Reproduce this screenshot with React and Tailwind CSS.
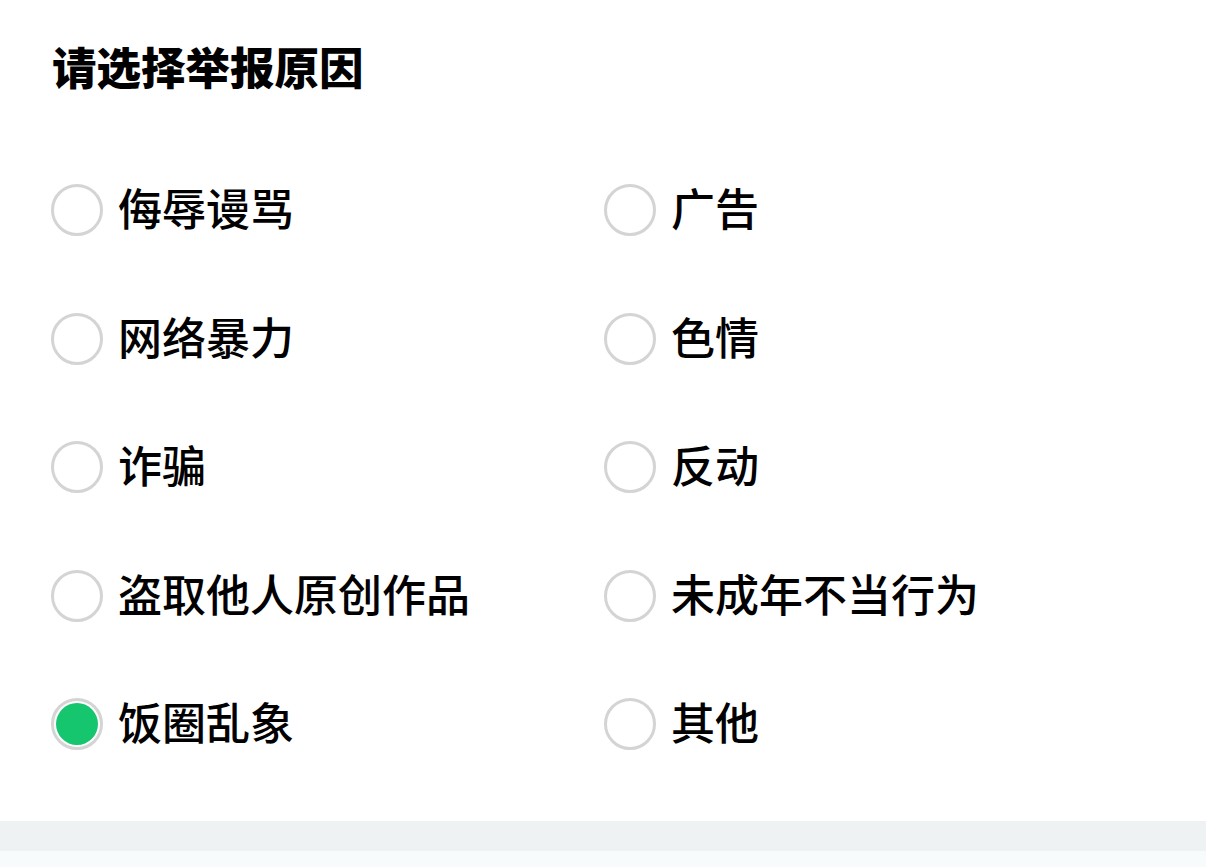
import React from "react";

const options = [
  ["侮辱谩骂", "广告"],
  ["网络暴力", "色情"],
  ["诈骗", "反动"],
  ["盗取他人原创作品", "未成年不当行为"],
  ["饭圈乱象", "其他"],
];

function Radio({ checked }) {
  return (
    <div className="w-[52px] h-[52px] rounded-full border-[3px] border-[#d4d4d4] flex items-center justify-center shrink-0 bg-white">
      {checked && <div className="w-[42px] h-[42px] rounded-full bg-[#15c66e]" />}
    </div>
  );
}

export default function App() {
  const font = { fontFamily: '"Noto Sans CJK SC", "Noto Sans", sans-serif' };
  return (
    <div className="w-[1206px] h-[867px] bg-white flex flex-col overflow-hidden" style={font}>
      <div className="pl-[52px] pt-[43px] h-[91px] text-[44.5px] leading-[45px] font-black text-black">
        请选择举报原因
      </div>
      <div className="mt-[54.75px] pl-[51px] grid grid-cols-[553px_1fr]">
        {options.map(([a, b], i) => (
          <React.Fragment key={i}>
            <div className="h-[128.5px] flex items-center gap-[15px]">
              <Radio checked={a === "饭圈乱象"} />
              <span className="text-[44px] leading-none font-medium text-black pb-[6px]">{a}</span>
            </div>
            <div className="h-[128.5px] flex items-center gap-[15px]">
              <Radio checked={false} />
              <span className="text-[44px] leading-none font-medium text-black pb-[6px]">{b}</span>
            </div>
          </React.Fragment>
        ))}
      </div>
      <div className="mt-[33px] h-[30px] bg-[#eef2f3]" />
      <div className="flex-1 bg-[#f8fbfc]" />
    </div>
  );
}
